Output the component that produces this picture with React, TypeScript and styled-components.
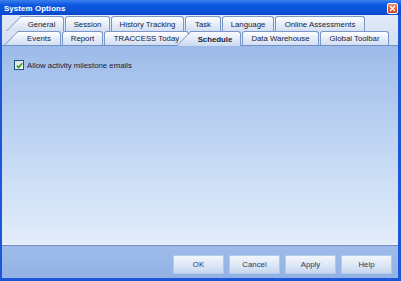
import React from 'react';
import styled, { createGlobalStyle, css } from 'styled-components';

const GlobalStyle = createGlobalStyle`
  html, body {
    margin: 0;
    padding: 0;
    background: #ffffff;
  }
  body {
    font-family: "Liberation Sans", Arial, sans-serif;
  }
`;

const row1 = [
  { label: 'General', w: 44, slant: true },
  { label: 'Session', w: 45 },
  { label: 'History Tracking', w: 73 },
  { label: 'Task', w: 36 },
  { label: 'Language', w: 52 },
  { label: 'Online Assessments', w: 90 },
];

const row2 = [
  { label: 'Events', w: 43, slant: true },
  { label: 'Report', w: 41 },
  { label: 'TRACCESS Today', w: 85 },
  { label: 'Schedule', w: 51, slant: true, active: true },
  { label: 'Data Warehouse', w: 77 },
  { label: 'Global Toolbar', w: 69 },
];

const buttons = ['OK', 'Cancel', 'Apply', 'Help'];

const App: React.FC = () => {
  return (
    <>
      <GlobalStyle />
      <Window>
        <TitleBar>
          <Title>System Options</Title>
          <CloseButton>
            <svg width="7" height="7" viewBox="0 0 7 7">
              <path d="M1 1 L6 6 M6 1 L1 6" stroke="#fff" strokeWidth="1.4" />
            </svg>
          </CloseButton>
        </TitleBar>
        <Client>
          <TabStrip>
            <TabRow $indent={20} $h={15}>
              {row1.map((t) => (
                <Tab key={t.label} $w={t.w} $slant={t.slant}>
                  {t.label}
                </Tab>
              ))}
            </TabRow>
            <TabRow $indent={18} $h={14}>
              {row2.map((t) => (
                <Tab key={t.label} $w={t.w} $slant={t.slant} $active={t.active}>
                  {t.label}
                </Tab>
              ))}
            </TabRow>
          </TabStrip>
          <Body>
            <CheckRow>
              <CheckBox>
                <svg width="7" height="7" viewBox="0 0 7 7">
                  <path d="M0.8 3.6 L2.7 5.5 L6.2 1.3" stroke="#21a121" strokeWidth="1.6" fill="none" />
                </svg>
              </CheckBox>
              <CheckLabel>Allow activity milestone emails</CheckLabel>
            </CheckRow>
          </Body>
          <Footer>
            {buttons.map((b) => (
              <Button key={b}>{b}</Button>
            ))}
          </Footer>
        </Client>
      </Window>
    </>
  );
};

export default App;

const Window = styled.div`
  width: 401px;
  height: 281px;
  display: flex;
  flex-direction: column;
  background: #1d56d6;
  overflow: hidden;
`;

const TitleBar = styled.div`
  height: 15px;
  flex: none;
  display: flex;
  align-items: center;
  justify-content: space-between;
  padding: 1px 3px 0 4px;
  box-sizing: border-box;
  background: linear-gradient(#3b80ee, #0b57e0 35%, #0a50d6 80%, #0846c4);
`;

const Title = styled.div`
  color: #ffffff;
  font-weight: bold;
  font-size: 7.9px;
  letter-spacing: 0.1px;
`;

const CloseButton = styled.div`
  width: 11px;
  height: 11px;
  box-sizing: border-box;
  border: 1px solid #ffffff;
  border-radius: 2px;
  background: linear-gradient(#f0906c, #e0542c 60%, #c9401c);
  display: flex;
  align-items: center;
  justify-content: center;
`;

const Client = styled.div`
  flex: 1;
  display: flex;
  flex-direction: column;
  margin: 0 3px 3px 2px;
  min-height: 0;
`;

const TabStrip = styled.div`
  height: 30px;
  flex: none;
  box-sizing: border-box;
  padding-top: 1px;
  background: linear-gradient(#e2eaf8, #d4e0f4);
  display: flex;
  flex-direction: column;
`;

const TabRow = styled.div<{ $indent: number; $h: number }>`
  display: flex;
  height: ${(p) => p.$h}px;
  padding-left: ${(p) => p.$indent - 2}px;
`;

const tabFill = 'linear-gradient(#ffffff, #e9eff9 45%, #d3dff2)';

const Tab = styled.div<{ $w: number; $slant?: boolean; $active?: boolean }>`
  position: relative;
  z-index: 0;
  box-sizing: border-box;
  width: ${(p) => p.$w}px;
  height: 100%;
  margin-right: 1px;
  border: 1px solid #7a96c6;
  border-bottom: none;
  border-radius: 3px 3px 0 0;
  background: ${tabFill};
  display: flex;
  align-items: center;
  justify-content: center;
  font-size: 7.8px;
  color: #16223c;
  white-space: nowrap;
  ${(p) =>
    p.$slant &&
    css`
      border-left: none;
      border-top-left-radius: 0;
      &::before {
        content: '';
        position: absolute;
        z-index: -1;
        left: -14px;
        top: -1px;
        bottom: 0;
        width: 24px;
        box-sizing: border-box;
        border-left: 1px solid #7a96c6;
        border-top: 1px solid #7a96c6;
        background: ${tabFill};
        transform: skewX(-45deg);
        transform-origin: bottom left;
      }
    `}
  ${(p) =>
    p.$active &&
    css`
      font-weight: bold;
      height: calc(100% + 1px);
      background: linear-gradient(#f7f9fd, #e4ebf7 50%, #c9d8f0);
      &::before {
        background: linear-gradient(#f7f9fd, #e4ebf7 50%, #c9d8f0);
      }
    `}
`;

const Body = styled.div`
  flex: 1;
  border-top: 1px solid #7090c6;
  border-bottom: 1px solid #eef4fd;
  background: linear-gradient(#9dbbe9, #c4d8f4 55%, #e3edfb);
  padding: 14px 12px;
`;

const CheckRow = styled.div`
  display: flex;
  align-items: center;
  gap: 3px;
`;

const CheckBox = styled.div`
  width: 10px;
  height: 10px;
  box-sizing: border-box;
  border: 1px solid #1c5180;
  background: linear-gradient(135deg, #dcdcd6, #ffffff);
  display: flex;
  align-items: center;
  justify-content: center;
`;

const CheckLabel = styled.div`
  font-size: 7.8px;
  color: #16203a;
`;

const Footer = styled.div`
  height: 33px;
  flex: none;
  box-sizing: border-box;
  border-top: 1px solid #6f8dc4;
  background: linear-gradient(#9dbbea, #93b2e4);
  display: flex;
  justify-content: flex-end;
  align-items: flex-start;
  gap: 5px;
  padding: 9px 6px 0 0;
`;

const Button = styled.div`
  width: 51px;
  height: 19px;
  box-sizing: border-box;
  border: 1px solid #b4c9ea;
  border-radius: 1px;
  background: linear-gradient(#f3f6fc, #e2eaf7 45%, #c6d6ef);
  display: flex;
  align-items: center;
  justify-content: center;
  font-size: 7.8px;
  color: #2c3a58;
`;
